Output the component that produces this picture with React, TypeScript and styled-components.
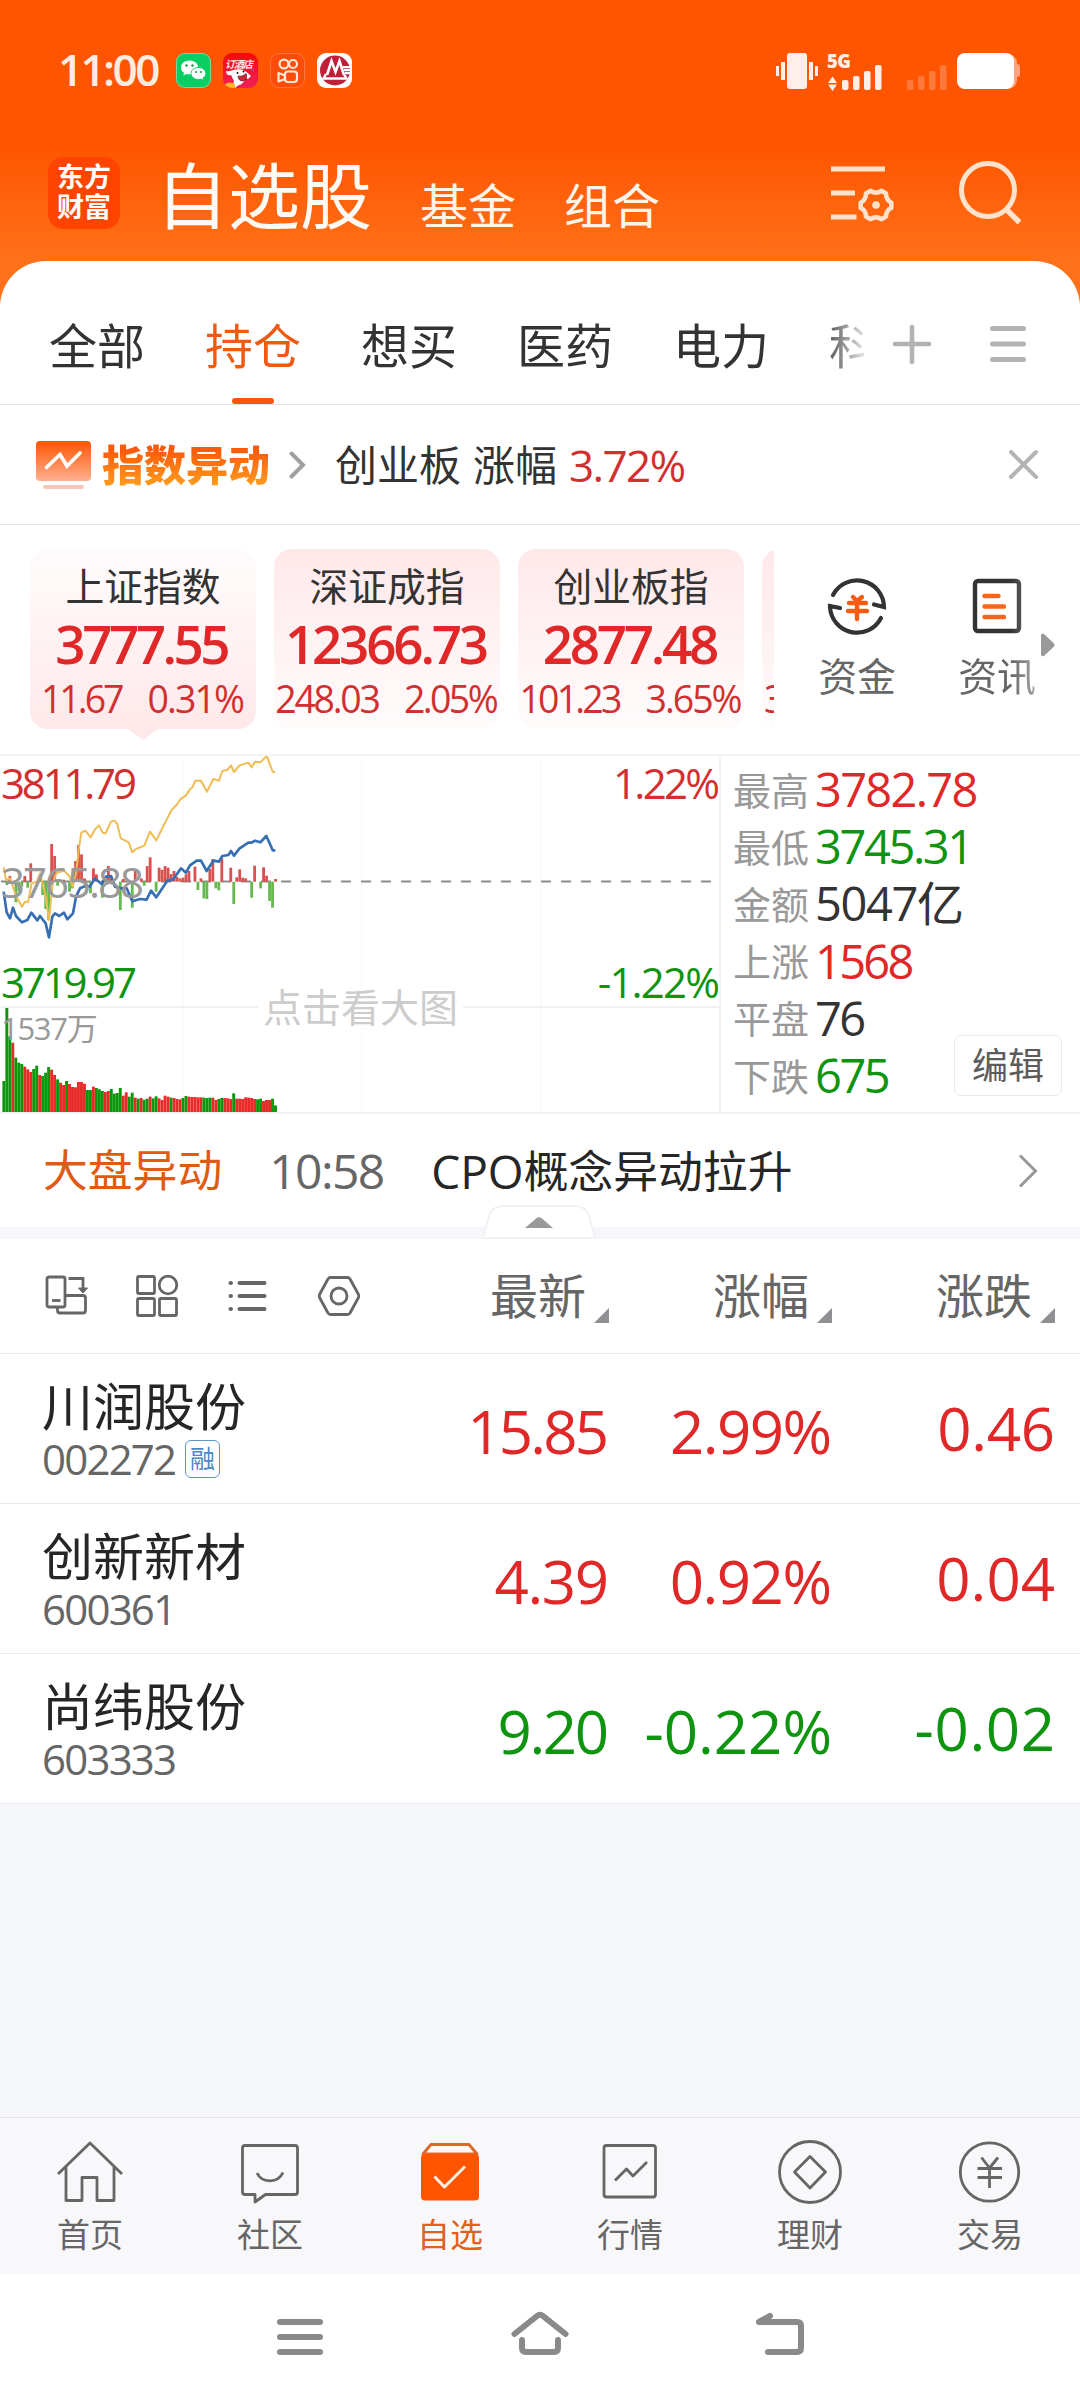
import React from 'react';
import styled, { createGlobalStyle, css } from 'styled-components';

const RED = '#e02828';
const GREEN = '#0f9410';
const ORANGE = '#ff5500';

const GlobalStyle = createGlobalStyle`
  * { box-sizing: border-box; }
  body {
    margin: 0;
    background: #fff;
    font-family: "Noto Sans", "Noto Sans CJK SC", sans-serif;
    color: #333;
  }
  svg { display: block; flex: none; }
`;

const Screen = styled.main`
  width: 1080px;
  height: 2400px;
  display: flex;
  flex-direction: column;
  overflow: hidden;
  background: #f6f7fa;
`;

interface TxtProps {
  $size: number;
  $color?: string;
  $ls?: number;
  $weight?: number;
  $lh?: number;
}

const Txt = styled.span<TxtProps>`
  font-size: ${(p) => p.$size}px;
  line-height: ${(p) => p.$lh ?? p.$size}px;
  color: ${(p) => p.$color ?? '#333'};
  letter-spacing: ${(p) => p.$ls ?? 0}px;
  margin-right: ${(p) => -(p.$ls ?? 0)}px;
  font-weight: ${(p) => p.$weight ?? 400};
  white-space: nowrap;
  flex: none;
`;

const Num = styled(Txt)`
  font-family: "Open Sans", "Noto Sans", "Noto Sans CJK SC", sans-serif;
`;

/* ---------- header ---------- */

const Top = styled.header`
  height: 307px;
  flex: none;
  background: linear-gradient(#ff5500 0, #ff5500 145px, #ff7119 262px);
`;

const StatusBar = styled.div`
  height: 142px;
  padding: 53px 60px 0 58px;
  display: flex;
  align-items: flex-start;
`;

const AppIcons = styled.div`
  display: flex;
  gap: 12px;
  margin-left: 16px;
`;

const AppIcon = styled.div<{ $bg: string; $line?: string }>`
  width: 35px;
  height: 35px;
  border-radius: 9px;
  overflow: hidden;
  background: ${(p) => p.$bg};
  box-shadow: inset 0 0 0 1px ${(p) => p.$line ?? 'transparent'};
`;

const StatusRight = styled.div`
  margin-left: auto;
  display: flex;
`;

const TitleBar = styled.div`
  height: 119px;
  padding: 15px 59px 0 48px;
  display: flex;
  align-items: flex-start;
`;

const Logo = styled.div`
  width: 72px;
  height: 72px;
  border-radius: 15px;
  background: #ff4400;
  color: #fff;
  font-size: 27px;
  line-height: 30px;
  font-weight: 700;
  padding: 5px 9px;
  text-align: center;
  white-space: nowrap;
`;

const Titles = styled.div`
  margin-left: 36px;
  display: flex;
  align-items: flex-end;
  height: 74px;
  gap: 48px;
`;

const TitleIcons = styled.div`
  margin-left: auto;
  display: flex;
  padding-top: 4px;
  gap: 63px;
`;

/* ---------- tabs ---------- */

const TabsBar = styled.nav`
  height: 144px;
  flex: none;
  margin-top: -46px;
  border-radius: 46px 46px 0 0;
  background: #fff;
  border-bottom: 1px solid #e4e4e4;
  padding: 0 50px 0 49px;
  display: flex;
  align-items: stretch;
`;

const TabScroller = styled.div`
  width: 815px;
  overflow: hidden;
  display: flex;
  gap: 60px;
  mask-image: linear-gradient(90deg, #000 770px, transparent 822px);
`;

const Tab = styled.div<{ $active?: boolean }>`
  flex: none;
  display: flex;
  flex-direction: column;
  align-items: center;
  padding-top: 61px;
  font-size: 48px;
  line-height: 48px;
  color: ${(p) => (p.$active ? '#f05a10' : '#333')};
  &::after {
    content: "";
    width: 42px;
    height: 6px;
    border-radius: 3px;
    margin-top: 28px;
    background: ${(p) => (p.$active ? '#f7560c' : 'transparent')};
  }
`;

const TabTools = styled.div`
  display: flex;
  gap: 57px;
  margin-left: 28px;
  padding-top: 62px;
`;

/* ---------- alert ---------- */

const Alert = styled.div`
  height: 120px;
  flex: none;
  background: #fff;
  border-bottom: 1px solid #e4e4e4;
  display: flex;
  align-items: center;
  padding: 0 41px 0 36px;
`;

const AlertTag = styled.span`
  font-size: 42px;
  line-height: 50px;
  font-weight: 900;
  margin: 0 19px 0 11px;
  background: linear-gradient(#fa5a0a 10px, #ff9a1e 45px);
  background-clip: text;
  color: transparent;
`;

const AlertText = styled.div`
  display: flex;
  gap: 12px;
  margin-left: 29px;
  flex: 1;
`;

/* ---------- indices ---------- */

const IndexRow = styled.section`
  height: 229px;
  flex: none;
  background: #fff;
  padding: 24px 0 0 30px;
  display: flex;
`;

const Cards = styled.div`
  width: 744px;
  overflow: hidden;
  display: flex;
  gap: 18px;
`;

const Card = styled.div<{ $active?: boolean }>`
  position: relative;
  flex: none;
  width: 226px;
  height: 180px;
  border-radius: 18px;
  display: flex;
  flex-direction: column;
  align-items: center;
  padding-top: 17px;
  background: ${(p) => (p.$active ? 'linear-gradient(#fffcfc, #ffe8ea)' : 'linear-gradient(#ffe8ea, #fffcfc)')};
  ${(p) =>
    p.$active &&
    css`
      &::after {
        content: "";
        position: absolute;
        top: 179px;
        left: 97px;
        border: 16px solid transparent;
        border-top: 12px solid #ffe8ea;
        border-bottom: 0;
      }
    `}
`;

const CardValue = styled(Num)`
  margin-top: 11px;
`;

const CardChange = styled.div`
  display: flex;
  gap: 23px;
  margin-top: 9px;
`;

const NextCard = styled(Card)`
  align-items: flex-start;
  padding: 131px 0 0 2px;
`;

const Quick = styled.div`
  flex: 1;
  display: flex;
  padding-left: 43px;
`;

const QuickItem = styled.div<{ $fade?: boolean }>`
  width: ${(p) => (p.$fade ? 82 : 80)}px;
  margin-right: ${(p) => (p.$fade ? 2 : 59)}px;
  padding-top: 26px;
  display: flex;
  flex-direction: column;
  align-items: center;
  gap: 19px;
  ${(p) => p.$fade && 'mask-image: linear-gradient(90deg, #000 55px, rgba(0,0,0,.55) 82px);'}
`;

const QuickArrow = styled.div`
  padding-top: 84px;
`;

/* ---------- market panel ---------- */

const Market = styled.section`
  height: 360px;
  flex: none;
  display: flex;
  background: #fff;
  border-top: 2px solid #f4f4f5;
  border-bottom: 2px solid #f4f4f5;
`;

const ChartBox = styled.div`
  position: relative;
  width: 721px;
  border-right: 2px solid #f4f4f5;
`;

const ChartLabel = styled.div<{ $top: number; $right?: boolean }>`
  position: absolute;
  top: ${(p) => p.$top}px;
  ${(p) => (p.$right ? 'right: -1px;' : 'left: 1px;')}
  display: flex;
`;

const ChartHint = styled.div`
  position: absolute;
  left: 258px;
  top: 230px;
  padding: 0 5px;
  background: #fff;
  font-size: 39px;
  line-height: 42px;
  color: #ccc;
`;

const Stats = styled.div`
  position: relative;
  flex: 1;
  padding: 5px 0 0 12px;
`;

const Stat = styled.div`
  height: 57.2px;
  display: flex;
  align-items: center;
  gap: 6px;
`;

const EditButton = styled.button`
  position: absolute;
  right: 18px;
  bottom: 16px;
  width: 108px;
  height: 61px;
  padding: 0;
  border: 1px solid #eaeaea;
  border-radius: 7px;
  background: #fff;
  font: 400 36px/58px "Noto Sans", "Noto Sans CJK SC", sans-serif;
  color: #5c5c5c;
`;

/* ---------- news ---------- */

const News = styled.section`
  position: relative;
  height: 125px;
  flex: none;
  background: #fff;
  border-bottom: 12px solid #f5f7fa;
  padding: 0 42px 0 43px;
  display: flex;
  align-items: center;
`;

const NewsTime = styled(Num)`
  margin-left: 47px;
`;

const NewsTitle = styled.div`
  display: flex;
  flex: 1;
  margin-left: 46px;
`;

const Collapse = styled.div`
  position: absolute;
  left: 482px;
  top: 90px;
`;

/* ---------- table ---------- */

const Columns = styled.div`
  display: grid;
  grid-template-columns: 390px 219px 223px 223px;
  background: #fff;
  border-bottom: 1px solid #ebebeb;
  flex: none;
`;

const HeadRow = styled(Columns)`
  height: 115px;
  align-items: center;
`;

const Tools = styled.div`
  display: flex;
  gap: 46px;
  padding: 0 0 0 43px;
`;

const HeadCell = styled.div`
  display: flex;
  justify-content: flex-end;
  align-items: center;
  gap: 8px;
  svg { margin-top: 38px; }
`;

const StockRow = styled(Columns)`
  height: 150px;
`;

const StockName = styled.div`
  display: flex;
  flex-direction: column;
  align-items: flex-start;
  padding: 26px 0 0 42px;
`;

const CodeLine = styled.div`
  display: flex;
  align-items: center;
  height: 38px;
  margin-top: 8px;
`;

const MarginBadge = styled.span`
  width: 35px;
  height: 38px;
  margin-left: 8px;
  border: 1.5px solid #5b93cb;
  border-radius: 6px;
  font-size: 25px;
  line-height: 34px;
  text-align: center;
  color: #4a88c6;
`;

const ValueCell = styled.div<{ $top: number }>`
  padding-top: ${(p) => p.$top}px;
  display: flex;
  justify-content: flex-end;
  align-items: flex-start;
`;

/* ---------- bottom ---------- */

const NavBar = styled.nav`
  height: 157px;
  flex: none;
  margin-top: auto;
  border-top: 1px solid #e2e2e4;
  background: #f8f8fb;
  display: grid;
  grid-template-columns: repeat(6, 180px);
`;

const NavItem = styled.div<{ $active?: boolean }>`
  display: flex;
  flex-direction: column;
  align-items: center;
  padding-top: 20px;
  gap: 12px;
  font-size: 33px;
  line-height: 34px;
  color: ${(p) => (p.$active ? '#e2601c' : '#666')};
`;

const SystemBar = styled.div`
  height: 126px;
  flex: none;
  background: #fff;
  display: flex;
  justify-content: center;
  gap: 180px;
  padding-top: 29px;
`;

/* ---------- chart data ---------- */

const VOLUME = [
  93, 312, 227, 208, 163, 148, 144, 136, 128, 120, 129, 139, 111, 108, 118, 135, 127, 111, 98, 88, 81, 93, 84, 75,
  74, 90, 90, 85, 66, 66, 76, 72, 68, 63, 60, 63, 69, 55, 57, 72, 49, 59, 46, 58, 43, 40, 42, 37, 40, 46, 41, 47, 41,
  36, 49, 46, 43, 42, 39, 38, 42, 48, 46, 45, 45, 44, 44, 43, 42, 43, 43, 36, 39, 42, 42, 41, 39, 56, 40, 40, 39, 44,
  43, 42, 39, 38, 40, 33, 36, 36, 40, 20,
];
const VOLUME_DIR =
  'GGGRGGGRRRGGRGGGRRGRRGRRRRRRGGRGGGRRGGGGRRGGRGRGGRGGRRRRGRRRGGRRRRRGGGRRGGRRRGRRRRRRRGGRRRGGGR'.split('');

const FLOW: [number, number][] = [
  [2, 17], [7, 17], [9, 55], [12, 8], [16, 113], [17, 77], [20, 6], [24, 62], [25, 110], [26, 82], [27, 10],
  [30, 40], [31, 22], [34, 10], [35, 47], [36, 15], [40, 8], [44, 35], [46, 10], [48, 47], [49, 73], [52, 42],
  [53, 36], [54, 47], [55, 42], [56, 23], [57, 32], [58, 14], [59, 10], [60, 12], [61, 22], [62, 32], [64, 45],
  [66, 10], [69, 38], [70, 68], [73, 70], [76, 42], [78, 13], [79, 37], [80, 12], [81, 10], [84, 48], [87, 43],
  [88, 18], [91, 8], [1, -10], [4, -62], [5, -30], [6, -15], [8, -18], [13, -40], [14, -82], [15, -115],
  [18, -12], [22, -30], [23, -20], [29, -35], [33, -48], [39, -85], [43, -78], [47, -12], [51, -30], [65, -25],
  [67, -50], [68, -52], [71, -20], [72, -26], [77, -67], [83, -48], [86, -20], [89, -58], [90, -78],
];

const AVERAGE =
  '11,382 18,420 30,415 48,468 66,500 75,485 84,487 95,430 110,425 120,400 135,460 147,540 158,430 170,398 192,392 208,408 218,440 228,400 236,330 244,278 256,272 272,292 285,268 297,256 308,278 317,280 333,245 343,242 352,252 362,295 386,307 397,337 408,327 433,317 450,275 469,301 490,258 515,210 532,192 541,178 558,166 570,148 577,142 586,122 603,122 621,155 640,117 657,122 667,93 683,89 693,76 702,96 718,77 745,68 755,82 765,65 781,67 800,48 818,95 826,96';
const PRICE =
  '11,455 20,517 30,535 39,503 48,528 66,547 82,540 94,518 112,541 120,528 137,550 147,592 157,530 165,520 178,528 192,518 202,538 219,520 228,470 240,445 256,438 270,440 284,415 305,432 318,410 333,408 345,440 362,445 380,445 397,484 420,477 440,479 453,452 469,472 490,440 502,422 520,418 543,385 558,398 570,376 590,362 603,362 620,393 640,362 657,365 667,348 685,345 693,333 702,347 718,326 745,308 755,308 765,302 781,307 799,288 810,312 818,331 826,331';

const Chart = () => (
  <svg width="719" height="356" viewBox="0 16 719 356">
    <g stroke="#f0f0f1" strokeDasharray="2 2">
      <path d="M183 16V372M362 16V372M541 16V372" />
    </g>
    <path d="M1 267H719" stroke="#f1f1f2" strokeWidth="2" />
    <path d="M1 141.5H715" stroke="#8c8c8c" strokeWidth="2" strokeDasharray="10 10" />
    {FLOW.map(([i, v]) => (
      <rect
        key={i}
        x={2.5 + i * 2.985}
        y={v > 0 ? 141.7 - v / 3 : 141.7}
        width="2.8"
        height={Math.abs(v) / 3}
        fill={v > 0 ? '#d9504e' : '#66b94f'}
      />
    ))}
    {VOLUME.map((v, i) => (
      <rect
        key={i}
        x={2.4 + i * 2.985}
        y={372 - v / 3}
        width="2.9"
        height={v / 3}
        fill={VOLUME_DIR[i] === 'R' ? '#e82a28' : '#0c960c'}
      />
    ))}
    <g transform="scale(.33333)" fill="none" strokeLinejoin="round">
      <polyline points={AVERAGE} stroke="#efbd55" strokeWidth="6" />
      <polyline points={PRICE} stroke="#366fb4" strokeWidth="8" />
    </g>
  </svg>
);

/* ---------- data ---------- */

const INDICES = [
  { name: '上证指数', value: '3777.55', vls: -3.5, diff: '11.67', dls: -3, pct: '0.31%', pls: -1.9, active: true },
  { name: '深证成指', value: '12366.73', vls: -3.2, diff: '248.03', dls: -2.3, pct: '2.05%', pls: -2.6 },
  { name: '创业板指', value: '2877.48', vls: -3.3, diff: '101.23', dls: -2.8, pct: '3.65%', pls: -2 },
];

const STATS = [
  { label: '最高', value: '3782.78', color: RED, ls: -1.7 },
  { label: '最低', value: '3745.31', color: GREEN, ls: -2.4 },
  { label: '金额', value: '5047亿', color: '#333', ls: -1.4 },
  { label: '上涨', value: '1568', color: RED, ls: -2.7 },
  { label: '平盘', value: '76', color: '#333', ls: -2.6 },
  { label: '下跌', value: '675', color: GREEN, ls: -2.5 },
];

interface Stock {
  name: string;
  code: string;
  margin?: boolean;
  color: string;
  values: [string, number][];
}

const STOCKS: Stock[] = [
  { name: '川润股份', code: '002272', margin: true, color: RED, values: [['15.85', -2.8], ['2.99%', -1.6], ['0.46', -0.3]] },
  { name: '创新新材', code: '600361', color: RED, values: [['4.39', -1.4], ['0.92%', -1.5], ['0.04', 0]] },
  { name: '尚纬股份', code: '603333', color: GREEN, values: [['9.20', -2.4], ['-0.22%', 0], ['-0.02', 0.6]] },
];

const SortMark = () => (
  <svg width="15" height="15" viewBox="0 0 15 15"><path d="M15 0V15H0Z" fill="#8f8f94" /></svg>
);

const NAV = [
  {
    label: '首页',
    icon: <path d="M3 36L35 5L67 36M11 29V62.500H27V39.500H42V62.500H59V29" />,
  },
  {
    label: '社区',
    icon: (
      <>
        <path d="M10 7.500H60Q62.500 7.500 62.500 10V54Q62.500 56.500 60 56.500H30.500L20 64V56.500H10Q7.500 56.500 7.500 54V10Q7.500 7.500 10 7.500Z" />
        <path d="M22 35C27 45.500 43 45.500 48 34.500" />
      </>
    ),
  },
  {
    label: '自选',
    active: true,
    icon: (
      <>
        <path d="M16 6.500H54L62 16H8Z" stroke="#de672b" fill="#fffaf6" />
        <rect x="6" y="16" width="58" height="46.500" rx="4" fill={ORANGE} stroke="none" />
        <path d="M19.500 38.500L29.500 49L50 28.500" stroke="#fff0e0" strokeWidth="3" />
      </>
    ),
  },
  {
    label: '行情',
    icon: (
      <>
        <rect x="9" y="7.500" width="51.500" height="51.500" rx="2.500" />
        <path d="M20 42.500L31.500 31L38 38L52 24" />
      </>
    ),
  },
  {
    label: '理财',
    icon: (
      <>
        <circle cx="35" cy="34" r="30.500" />
        <path d="M35 18.500L50.500 34L35 50L19.500 34Z" />
      </>
    ),
  },
  {
    label: '交易',
    icon: (
      <>
        <circle cx="34.500" cy="34" r="29.200" />
        <path d="M26.500 19.500L34.500 30L43 19.500M22.500 30.500H47M22.500 39.500H47M34.500 30V50" />
      </>
    ),
  },
];

export default function App() {
  return (
    <Screen>
      <GlobalStyle />
      <Top>
        <StatusBar>
          <Num $size={44} $lh={33} $ls={-2.6} $weight={600} $color="#ffece0">11:00</Num>
          <AppIcons>
            <AppIcon $bg="#07cf63" $line="#7ed49a">
              <svg width="35" height="35" viewBox="0 0 35 35">
                <path d="M13.500 7.500c-5 0-8.500 3.200-8.500 7 0 2.300 1.100 4 3 5.300l-.7 2.700 3-1.600c1 .3 2 .4 3.200.4 5 0 8.600-3 8.600-6.800s-3.600-7-8.600-7z" fill="#fff" />
                <path d="M22.500 14.500c-4.300 0-7.500 2.700-7.500 6s3.200 6 7.500 6c.9 0 1.700-.1 2.500-.3l2.500 1.300-.6-2.300c1.800-1.100 2.900-2.800 2.900-4.700 0-3.300-3-6-7.300-6z" fill="#fff" stroke="#07cf63" strokeWidth="1" />
                <g fill="#079a4c"><circle cx="10.500" cy="12.500" r="1.200" /><circle cx="16.500" cy="12.500" r="1.200" /><circle cx="20" cy="19" r="1" /><circle cx="25" cy="19" r="1" /></g>
              </svg>
            </AppIcon>
            <AppIcon $bg="linear-gradient(#f80808,#f0205a)">
              <svg width="35" height="35" viewBox="0 0 35 35">
                <text x="2" y="15" fontSize="10" fontWeight="700" fontStyle="italic" fill="#ffe9e9" fontFamily="Noto Sans CJK SC" textLength="28">订酒店</text>
                <path d="M3 18c4 1 6-2 12-1.500 6-1 9 3.500 13 6.500l-3 3-3-1.500c0 4-3 7-7 8l-3 2.500h-3l2-7c-2-3-2-5-3-6-3 1-5-1-5-4z" fill="#fff" />
                <path d="M15 23c4 1 6-1 8-2.500 2 5-1 7.500-4 7.500-2 0-4-2-4-5z" fill="#d02430" stroke="#46282b" strokeWidth=".7" />
                <circle cx="14.500" cy="20" r=".9" /><circle cx="20.500" cy="18.500" r="1" />
                <path d="M28 17l3-2v3z" fill="#5e6ca8" />
                <path d="M2 31q5-3 10 0v4H3z" fill="#ffb52a" />
              </svg>
            </AppIcon>
            <AppIcon $bg="#ff4c0a" $line="#ff7440">
              <svg width="35" height="35" viewBox="0 0 35 35" fill="none" stroke="#ffe6d4" strokeWidth="2.200">
                <circle cx="14" cy="11" r="4.400" /><circle cx="23" cy="11" r="4" />
                <rect x="15" y="18.500" width="12" height="10.500" rx="3" />
                <path d="M15 22.500l-6.500-2.500v8.500L15 26" strokeLinejoin="round" />
              </svg>
            </AppIcon>
            <AppIcon $bg="#fff">
              <svg width="35" height="35" viewBox="0 0 35 35">
                <circle cx="18" cy="17.500" r="15" fill="#c01f3a" />
                <path d="M10 22L14.500 8L18.500 19L22.500 8L27 22" fill="none" stroke="#fff" strokeWidth="2.600" />
                <path d="M9 21L6.500 25.500H29.500L27 21" fill="none" stroke="#fff" strokeWidth="2.400" />
                <path d="M26 14h9M27 17h8M28 20h7" stroke="#fff" strokeWidth="2" />
                <path d="M26 15.500h7M27 18.500h6M28 21.500h4" stroke="#c86478" strokeWidth="1" />
              </svg>
            </AppIcon>
          </AppIcons>
          <StatusRight>
            <svg width="245" height="40" viewBox="0 0 245 40" fill="#ffefe8">
              <rect x="12" y="0" width="20" height="36" rx="3" />
              <path d="M1 13h3v10H1zM6 9h4v18H6zM34 9h4v18h-4zM40 13h3v10h-3z" />
              <text x="52" y="15" fontSize="18.500" fontWeight="800" fontFamily="Open Sans" textLength="24">5G</text>
              <path d="M53 30l4.500-6.500 4.500 6.500zM53 31.500h9L57.500 38z" />
              <rect x="67" y="27" width="6.500" height="10" rx="2" /><rect x="78" y="23" width="6.500" height="14" rx="2" />
              <rect x="89" y="18" width="6.500" height="19" rx="2" /><rect x="100" y="12" width="6.500" height="25" rx="2" />
              <g fill="#ff7a3a">
                <rect x="132" y="27" width="6.500" height="10" rx="2" /><rect x="143" y="23" width="6.500" height="14" rx="2" />
                <rect x="154" y="18" width="6.500" height="19" rx="2" /><rect x="165" y="12" width="6.500" height="25" rx="2" />
              </g>
              <g fill="#ffa37c"><rect x="183" y="1" width="59" height="35" rx="9" /><rect x="236" y="11" width="9" height="13" rx="3" /></g>
              <rect x="182" y="0" width="57" height="36" rx="8" fill="#fff" />
            </svg>
          </StatusRight>
        </StatusBar>
        <TitleBar>
          <Logo>东方<br />财富</Logo>
          <Titles>
            <Txt $size={72} $color="#fffaf4">自选股</Txt>
            <Txt $size={48} $color="#fff4ea" $lh={51}>基金</Txt>
            <Txt $size={48} $color="#fff4ea" $lh={51}>组合</Txt>
          </Titles>
          <TitleIcons>
            <svg width="64" height="64" viewBox="0 0 64 64" fill="none" stroke="#ffe2cc" strokeWidth="5">
              <path d="M1 8H55M1 32H25M1 56H26.500" />
              <path d="M40.700 29.800Q46 33.500 51.300 29.800L56 32.500Q56 39 61.300 41.500V47Q56 49.500 56 55.500L51.300 58.200Q46 54.500 40.700 58.200L36 55.500Q36 49.500 30.700 47V41.500Q36 39 36 32.500Z" strokeLinejoin="round" strokeWidth="4.600" />
              <circle cx="46" cy="44" r="3.800" fill="#ffe2cc" stroke="none" />
            </svg>
            <svg width="64" height="66" viewBox="0 0 64 66" fill="none" stroke="#ffe2cc" strokeWidth="5">
              <circle cx="31" cy="29" r="26.500" /><path d="M49 48L62.500 61.500" strokeWidth="5.500" />
            </svg>
          </TitleIcons>
        </TitleBar>
      </Top>

      <TabsBar>
        <TabScroller>
          <Tab>全部</Tab>
          <Tab $active>持仓</Tab>
          <Tab>想买</Tab>
          <Tab>医药</Tab>
          <Tab>电力</Tab>
          <Tab>科</Tab>
        </TabScroller>
        <TabTools>
          <svg width="40" height="42" viewBox="0 0 40 42" stroke="#b3b3b3" strokeWidth="4.600" strokeLinecap="round">
            <path d="M3 21H37M20 4V39" />
          </svg>
          <svg width="40" height="42" viewBox="0 0 40 42" stroke="#b3b3b3" strokeWidth="5" strokeLinecap="round">
            <path d="M3.500 5.500H34.500M3.500 21H34.500M3.500 36.500H34.500" />
          </svg>
        </TabTools>
      </TabsBar>

      <Alert>
        <svg width="55" height="50" viewBox="0 0 55 50">
          <defs><linearGradient id="tag" x2="0" y2="1"><stop stopColor="#ff5500" /><stop offset="1" stopColor="#ffb090" /></linearGradient></defs>
          <rect x="0" y="1" width="55" height="40" rx="4" fill="url(#tag)" />
          <path d="M10.500 27.500L24 14.500L31 26L44 13" fill="none" stroke="#fff" strokeWidth="3.600" strokeLinecap="round" />
          <rect x="7" y="45" width="41" height="4" rx="2" fill="#f7c8b6" />
        </svg>
        <AlertTag>指数异动</AlertTag>
        <svg width="17" height="28" viewBox="0 0 17 28" fill="none" stroke="#a0a0a0" strokeWidth="4" strokeLinecap="round"><path d="M2.500 2.500L14 14L2.500 25.500" /></svg>
        <AlertText>
          <Txt $size={42} $lh={46}>创业板</Txt>
          <Txt $size={42} $lh={46}>涨幅</Txt>
          <Num $size={44} $lh={46} $ls={-1.6} $color="#d23030">3.72%</Num>
        </AlertText>
        <svg width="31" height="31" viewBox="0 0 31 31" stroke="#b3b3b3" strokeWidth="4" strokeLinecap="round"><path d="M3 3L28 28M28 3L3 28" /></svg>
      </Alert>

      <IndexRow>
        <Cards>
          {INDICES.map((d) => (
            <Card key={d.name} $active={d.active}>
              <Txt $size={38.8} $lh={40}>{d.name}</Txt>
              <CardValue $size={53} $lh={54} $ls={d.vls} $weight={600} $color={RED}>{d.value}</CardValue>
              <CardChange>
                <Num $size={37.5} $lh={38} $ls={d.dls} $color="#d23030">{d.diff}</Num>
                <Num $size={37.5} $lh={38} $ls={d.pls} $color="#d23030">{d.pct}</Num>
              </CardChange>
            </Card>
          ))}
          <NextCard>
            <Num $size={37.5} $lh={38} $color="#d23030">3</Num>
          </NextCard>
        </Cards>
        <Quick>
          <QuickItem>
            <svg width="60" height="62" viewBox="0 0 60 62" fill="none" stroke="#333" strokeWidth="4.200" strokeLinecap="round">
              <path d="M6 20A27 27 0 0 1 57 32L47 29.500M54 43A27 27 0 0 1 3 32L3 31L13 33" />
              <g stroke="#fb5b10" strokeWidth="4.400"><path d="M26 22L30 26L35 22M22 28H39M21 36H40M30 26V44" /></g>
            </svg>
            <Txt $size={38.8} $color="#666" $lh={40}>资金</Txt>
          </QuickItem>
          <QuickItem $fade>
            <svg width="60" height="62" viewBox="0 0 60 62" fill="none" stroke="#333" strokeWidth="4.400">
              <rect x="8" y="6" width="44" height="50" rx="3" />
              <g stroke="#f8641a" strokeLinecap="round"><path d="M17.500 21H31.500M17.500 31.500H37M17.500 42H37" /></g>
            </svg>
            <Txt $size={38.8} $color="#666" $lh={40}>资讯</Txt>
          </QuickItem>
          <QuickArrow>
            <svg width="16" height="24" viewBox="0 0 16 24"><path d="M1 2Q2 0 4 1L14 10.500Q15.500 12 14 13.500L4 23Q2 24 1 22Z" fill="#999" /></svg>
          </QuickArrow>
        </Quick>
      </IndexRow>

      <Market>
        <ChartBox>
          <Chart />
          <ChartHint>点击看大图</ChartHint>
          <ChartLabel $top={6}><Num $size={42} $lh={42} $ls={-3.2} $color="#d23030">3811.79</Num></ChartLabel>
          <ChartLabel $top={105}><Num $size={42} $lh={42} $ls={-2} $color="#999">3765.88</Num></ChartLabel>
          <ChartLabel $top={205}><Num $size={42} $lh={42} $ls={-3.2} $color={GREEN}>3719.97</Num></ChartLabel>
          <ChartLabel $top={6} $right><Num $size={42} $lh={42} $ls={-2.7} $color="#d23030">1.22%</Num></ChartLabel>
          <ChartLabel $top={205} $right><Num $size={42} $lh={42} $ls={-1.8} $color={GREEN}>-1.22%</Num></ChartLabel>
          <ChartLabel $top={256}><Num $size={31} $lh={32} $ls={-1.3} $color="#999">1537万</Num></ChartLabel>
        </ChartBox>
        <Stats>
          {STATS.map((s) => (
            <Stat key={s.label}>
              <Txt $size={38} $color="#999">{s.label}</Txt>
              <Num $size={47} $ls={s.ls} $color={s.color}>{s.value}</Num>
            </Stat>
          ))}
          <EditButton>编辑</EditButton>
        </Stats>
      </Market>

      <News>
        <Txt $size={44.8} $color="#e05a14">大盘异动</Txt>
        <NewsTime $size={48} $color="#666" $ls={-1.6}>10:58</NewsTime>
        <NewsTitle>
          <Num $size={46} $color="#262626">CPO</Num>
          <Txt $size={44.8} $lh={46} $color="#262626">概念异动拉升</Txt>
        </NewsTitle>
        <svg width="20" height="34" viewBox="0 0 20 34" fill="none" stroke="#999" strokeWidth="3"><path d="M2 1.500L17.500 17L2 32.500" /></svg>
        <Collapse>
          <svg width="114" height="36" viewBox="0 0 114 36">
            <path d="M1 34L7 12Q10 2 22 2H92Q104 2 107 12L113 34Z" fill="#fff" stroke="#f1f2f4" strokeWidth="2" />
            <path d="M43 24L54 14.500Q57 12 60 14.500L71 24Z" fill="#999" />
          </svg>
        </Collapse>
      </News>

      <HeadRow>
        <Tools>
          <svg width="45" height="44" viewBox="0 0 45 44" fill="none" stroke="#666" strokeWidth="2.800">
            <rect x="4" y="3" width="18" height="30" rx="2" /><path d="M9 26.500H17.500" />
            <path d="M25.500 4.500H40V18" /><path d="M35.500 14L40 19L44.500 14Z" fill="#666" strokeWidth="1" />
            <path d="M22 21.500H40Q42.500 21.500 42.500 24V36.500Q42.500 39 40 39H17Q14.500 39 14.500 36.500V33" />
          </svg>
          <svg width="45" height="44" viewBox="0 0 45 44" fill="none" stroke="#666" strokeWidth="2.800">
            <rect x="3.500" y="2.500" width="17" height="17" rx="1.500" /><circle cx="34" cy="11" r="8.800" />
            <rect x="3.500" y="24.500" width="17" height="17" rx="1.500" /><rect x="25.500" y="24.500" width="17" height="17" rx="1.500" />
          </svg>
          <svg width="45" height="44" viewBox="0 0 45 44" stroke="#666" strokeWidth="4" strokeLinecap="round">
            <path d="M5.500 9H6M5.500 22H6M5.500 35H6M14.500 9H39.500M14.500 22H39.500M14.500 35H39.500" />
          </svg>
          <svg width="45" height="44" viewBox="0 0 45 44" fill="none" stroke="#666" strokeWidth="2.800" strokeLinejoin="round">
            <path d="M14.500 3.500H31.500Q33 3.500 34 5L42.500 20.500Q43 22 42.500 23.500L34 39Q33 40.500 31.500 40.500H14.500Q13 40.500 12 39L3.500 23.500Q3 22 3.500 20.500L12 5Q13 3.500 14.500 3.500Z" />
            <circle cx="23" cy="22" r="8" />
          </svg>
        </Tools>
        {['最新', '涨幅', '涨跌'].map((h) => (
          <HeadCell key={h}>
            <Txt $size={48} $color="#666">{h}</Txt>
            <SortMark />
          </HeadCell>
        ))}
      </HeadRow>

      {STOCKS.map((s) => (
        <StockRow key={s.code}>
          <StockName>
            <Txt $size={51} $lh={52} $color="#262626">{s.name}</Txt>
            <CodeLine>
              <Num $size={42} $color="#666" $ls={-1.8}>{s.code}</Num>
              {s.margin && <MarginBadge>融</MarginBadge>}
            </CodeLine>
          </StockName>
          {s.values.map(([value, ls], i) => (
            <ValueCell key={i} $top={i === 2 ? 44 : 47}>
              <Num $size={60} $color={s.color} $ls={ls}>{value}</Num>
            </ValueCell>
          ))}
        </StockRow>
      ))}

      <NavBar>
        {NAV.map((n) => (
          <NavItem key={n.label} $active={n.active}>
            <svg width="70" height="68" viewBox="0 0 70 68" fill="none" stroke="#666" strokeWidth="2.800" strokeLinejoin="round">{n.icon}</svg>
            {n.label}
          </NavItem>
        ))}
      </NavBar>
      <SystemBar>
        <svg width="60" height="60" viewBox="0 0 60 60" stroke="#8a8a8a" strokeWidth="6" strokeLinecap="round"><path d="M10 19H50M10 34H50M10 49H50" /></svg>
        <svg width="60" height="60" viewBox="0 0 60 60" fill="none" stroke="#8a8a8a" strokeWidth="6" strokeLinecap="round" strokeLinejoin="round">
          <path d="M4.500 31L27 13Q30 10.500 33 13L55.500 31M12 37V45Q12 49 16 49H44Q48 49 48 45V37" />
        </svg>
        <svg width="60" height="60" viewBox="0 0 60 60" fill="none" stroke="#8a8a8a" strokeWidth="6" strokeLinecap="round" strokeLinejoin="round">
          <path d="M20 13L9 19H47Q51 19 51 23V45Q51 49 47 49H18" />
        </svg>
      </SystemBar>
    </Screen>
  );
}
